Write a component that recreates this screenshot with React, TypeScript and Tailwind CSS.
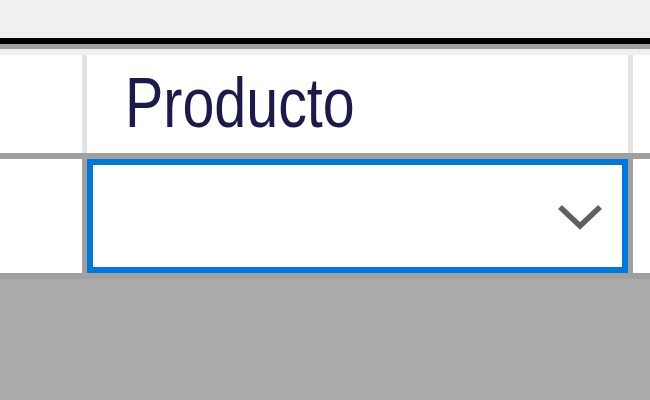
const App = () => {
  return (
    <div className="w-[650px] h-[400px] flex flex-col bg-[#ababab] overflow-hidden" style={{ fontFamily: '"Liberation Sans", Arial, sans-serif' }}>
      {/* toolbar strip above the grid */}
      <div className="h-[38px] bg-[#f0f0f0]" />
      <div className="h-[6px] bg-black" />
      <div className="h-[5px] bg-[#a0a0a0]" />
      <div className="h-[6px] bg-[#f0f0f0]" />

      {/* header row */}
      <div className="flex h-[98px] bg-white">
        <div className="w-[82px]" />
        <div className="w-[5px] bg-[#e3e3e3]" />
        <div className="w-[541px] pl-[38px] pt-[13px]">
          <span className="inline-block origin-left scale-x-[0.82] text-[70px] leading-none text-[#1c1a48]">Producto</span>
        </div>
        <div className="w-[5px] bg-[#e3e3e3]" />
        <div className="flex-1" />
      </div>

      <div className="h-[6px] bg-[#a0a0a0]" />

      {/* editing row with combo box cell */}
      <div className="flex h-[114px] bg-white">
        <div className="w-[82px]" />
        <div className="w-[5px] bg-[#a0a0a0]" />
        <div className="w-[541px] border-[6px] border-[#0078d7] flex items-center justify-end pr-[18px]">
          <svg width="48" height="32" viewBox="0 0 48 32" className="mt-[2px]">
            <polyline points="4,6 24,25 44,6" fill="none" stroke="#5f5f5f" strokeWidth="5.5" />
          </svg>
        </div>
        <div className="w-[5px] bg-[#a0a0a0]" />
        <div className="flex-1" />
      </div>

      <div className="h-[6px] bg-[#a0a0a0]" />
    </div>
  );
};
export default App;
